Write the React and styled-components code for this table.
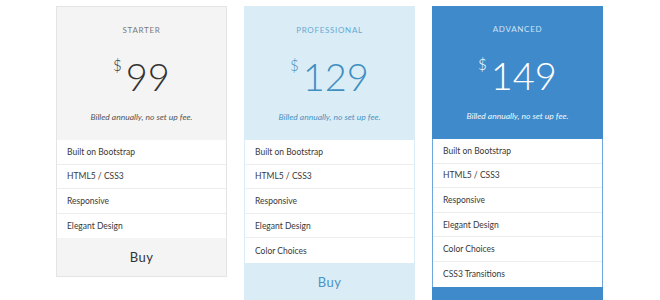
import React from "react";
import styled, { createGlobalStyle } from "styled-components";

const Global = createGlobalStyle`
  html, body { margin: 0; padding: 0; background: #fff; }
  body { font-family: "Lato", "Open Sans", sans-serif; }
  * { box-sizing: border-box; }
`;

const themes = {
  starter: {
    headBg: "#f4f4f4",
    border: "#e4e4e4",
    title: "#7a7a7a",
    price: "#333333",
    note: "#555555",
    buyBg: "#f4f4f4",
    buy: "#333333",
    rowBorder: "#ededed",
  },
  pro: {
    headBg: "#daedf7",
    border: "#daedf7",
    title: "#67a9d2",
    price: "#3f8fc1",
    note: "#4b93c2",
    buyBg: "#daedf7",
    buy: "#4a93c3",
    rowBorder: "#ededed",
  },
  adv: {
    headBg: "#3f8acb",
    border: "#6ea6de",
    title: "#cfe2f4",
    price: "#ffffff",
    note: "#f2f7fc",
    buyBg: "#3f8acb",
    buy: "#ffffff",
    rowBorder: "#ededed",
  },
};

const Page = styled.div`
  width: 660px;
  height: 300px;
  overflow: hidden;
  padding-top: 6px;
  display: flex;
  justify-content: center;
  align-items: flex-start;
`;

const Row = styled.div`
  display: grid;
  grid-template-columns: repeat(3, 171px);
  column-gap: 17px;
  margin-left: -1px;
  align-items: start;
`;

const Card = styled.div`
  border: 1px solid ${(p) => p.$t.border};
  border-bottom: none;
  background: #fff;
  display: flex;
  flex-direction: column;
`;

const Head = styled.div`
  background: ${(p) => p.$t.headBg};
  padding: 17px 0 17px;
  text-align: center;
  margin: ${(p) => (p.$t === themes.adv ? "-1px -1px 0" : "0")};
`;

const Title = styled.div`
  font-size: 8px;
  line-height: 12px;
  letter-spacing: 0.7px;
  text-transform: uppercase;
  color: ${(p) => p.$t.title};
  font-weight: 400;
`;

const Price = styled.div`
  margin-top: 21px;
  display: flex;
  justify-content: center;
  align-items: flex-start;
  color: ${(p) => p.$t.price};
  font-weight: 300;
`;

const Currency = styled.span`
  font-size: 15px;
  line-height: 15px;
  margin-top: 1px;
  margin-right: 4px;
`;

const Amount = styled.span`
  font-size: 38px;
  line-height: 38px;
`;

const Note = styled.div`
  margin-top: 16px;
  font-size: 8.5px;
  line-height: 12px;
  font-style: italic;
  color: ${(p) => p.$t.note};
`;

const Features = styled.ul`
  list-style: none;
  margin: 0;
  padding: 0;
`;

const Feature = styled.li`
  height: 24.6px;
  display: flex;
  align-items: center;
  padding-left: 10px;
  font-size: 8.5px;
  color: #383838;
  border-bottom: 1px solid ${(p) => p.$t.rowBorder};
  &:last-child { border-bottom: none; }
`;

const Buy = styled.div`
  background: ${(p) => p.$t.buyBg};
  height: 39px;
  display: flex;
  align-items: center;
  justify-content: center;
  font-size: 13px;
  letter-spacing: 0.5px;
  color: ${(p) => p.$t.buy};
  border-bottom: 1px solid ${(p) => p.$t.border};
  margin: ${(p) => (p.$t === themes.adv ? "0 -1px" : "0")};
`;

const plans = [
  {
    key: "starter",
    name: "Starter",
    price: "99",
    features: ["Built on Bootstrap", "HTML5 / CSS3", "Responsive", "Elegant Design"],
    buy: "Buy",
  },
  {
    key: "pro",
    name: "Professional",
    price: "129",
    features: [
      "Built on Bootstrap",
      "HTML5 / CSS3",
      "Responsive",
      "Elegant Design",
      "Color Choices",
    ],
    buy: "Buy",
  },
  {
    key: "adv",
    name: "Advanced",
    price: "149",
    features: [
      "Built on Bootstrap",
      "HTML5 / CSS3",
      "Responsive",
      "Elegant Design",
      "Color Choices",
      "CSS3 Transitions",
    ],
    buy: "Buy",
  },
];

export default function App() {
  return (
    <>
      <Global />
      <Page>
        <Row>
          {plans.map((p) => {
            const t = themes[p.key];
            return (
              <Card key={p.key} $t={t}>
                <Head $t={t}>
                  <Title $t={t}>{p.name}</Title>
                  <Price $t={t}>
                    <Currency>$</Currency>
                    <Amount>{p.price}</Amount>
                  </Price>
                  <Note $t={t}>Billed annually, no set up fee.</Note>
                </Head>
                <Features>
                  {p.features.map((f) => (
                    <Feature key={f} $t={t}>
                      {f}
                    </Feature>
                  ))}
                </Features>
                <Buy $t={t}>{p.buy}</Buy>
              </Card>
            );
          })}
        </Row>
      </Page>
    </>
  );
}
